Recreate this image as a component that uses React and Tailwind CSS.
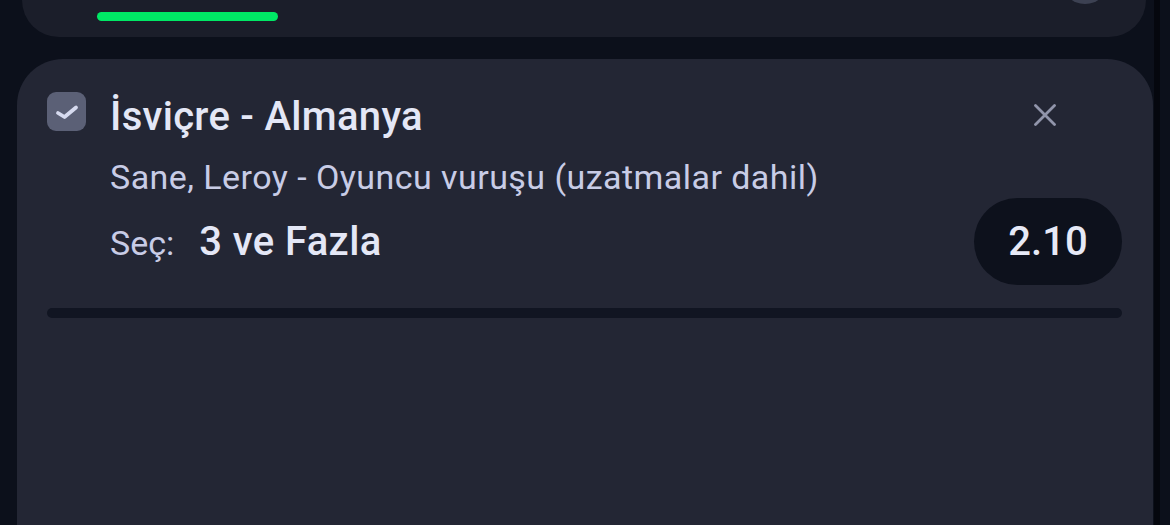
import React from "react";

const CheckBox = () => (
  <div className="w-[39px] h-[39px] rounded-[9px] bg-[#5b6076] flex items-center justify-center shrink-0">
    <svg width="26" height="26" viewBox="0 0 26 26" fill="none">
      <path d="M4 14 L10.5 18 L22 8.5" stroke="#d6daef" strokeWidth="3.8" strokeLinecap="round" strokeLinejoin="round" />
    </svg>
  </div>
);

const CloseIcon = () => (
  <svg width="22" height="22" viewBox="0 0 22 22" fill="none">
    <path d="M1.5 1.5 L20.5 20.5 M20.5 1.5 L1.5 20.5" stroke="#9195ab" strokeWidth="2.8" strokeLinecap="round" />
  </svg>
);

const App = () => {
  return (
    <div className="w-[1170px] h-[525px] bg-[#0c101b] overflow-hidden flex font-['Roboto',sans-serif]">
      <div className="w-[1154px] flex flex-col shrink-0">
        {/* previous card (cut off) */}
        <div className="ml-[22px] w-[1124px] h-[37px] rounded-b-[44px] bg-[#1b1e2a] flex justify-between items-start">
          <div className="ml-[75px] mt-[12px] w-[181px] h-[9px] rounded-full bg-[#00e865]" />
          <div className="mr-[37px] -mt-[44px] w-[48px] h-[48px] rounded-full bg-[#3c4152]" />
        </div>

        {/* bet slip card */}
        <div className="mt-[22px] ml-[17px] w-[1136px] flex-1 rounded-t-[46px] bg-[#232634] pl-[30px] pr-[31px] pt-[34px]">
          <div className="flex items-start">
            <div className="-mt-[1px]">
              <CheckBox />
            </div>
            <div className="ml-[24px] flex-1 flex flex-col">
              <div className="flex items-center justify-between h-[48px]">
                <span className="text-[40px] leading-[48px] font-medium text-[#e4e7f6] tracking-[0.3px]">İsviçre - Almanya</span>
                <div className="mr-[66px] mb-[4px]">
                  <CloseIcon />
                </div>
              </div>
              <div className="mt-[16px] text-[34px] leading-[40px] text-[#c8cce6] tracking-[0.45px]">
                Sane, Leroy - Oyuncu vuruşu (uzatmalar dahil)
              </div>
              <div className="mt-[1px] flex items-center justify-between">
                <div className="flex items-baseline">
                  <span className="text-[34px] text-[#c8cce6]">Seç:</span>
                  <span className="ml-[25px] text-[40px] font-medium text-[#e4e7f6] tracking-[0.4px]">3 ve Fazla</span>
                </div>
                <div className="w-[148px] h-[87px] rounded-full bg-[#0d111c] flex items-center justify-center">
                  <span className="text-[40px] font-medium text-[#e6e9f6]">2.10</span>
                </div>
              </div>
            </div>
          </div>
          <div className="mt-[23px] h-[10px] rounded-full bg-[#111522]" />
        </div>
      </div>
      <div className="w-[6px] bg-[#05070e] shrink-0" />
      <div className="flex-1" />
    </div>
  );
};

export default App;
